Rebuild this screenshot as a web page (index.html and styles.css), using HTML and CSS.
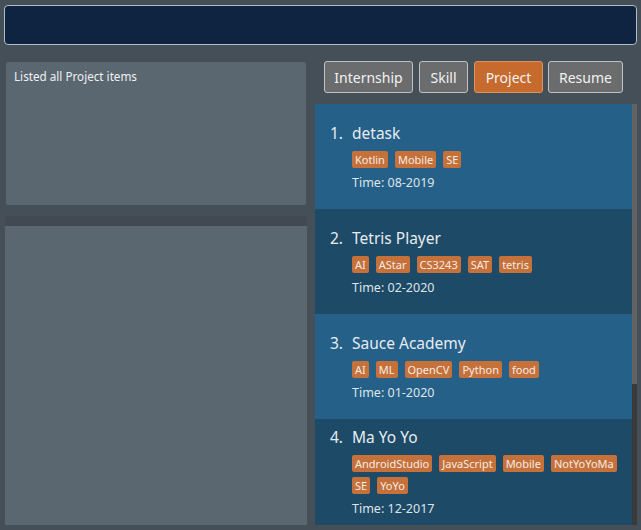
FILE: index.html
```html
<!DOCTYPE html>
<html>
<head>
<meta charset="utf-8">
<link rel="stylesheet" href="styles.css">
</head>
<body>
<div class="app">
  <div class="topbar"></div>
  <div class="main">
    <div class="left">
      <div class="result">Listed all Project items</div>
      <div class="split"><div class="split-band"></div></div>
      <div class="lower"></div>
    </div>
    <div class="right">
      <div class="tabs">
        <button class="tab tab-intern">Internship</button>
        <button class="tab tab-skill">Skill</button>
        <button class="tab tab-project active">Project</button>
        <button class="tab tab-resume">Resume</button>
      </div>
      <div class="list">
        <div class="cards">
          <div class="card light">
            <div class="title"><span class="num">1.</span><span class="name">detask</span></div>
            <div class="tags"><span class="tag">Kotlin</span><span class="tag">Mobile</span><span class="tag">SE</span></div>
            <div class="time">Time: 08-2019</div>
          </div>
          <div class="card dark">
            <div class="title"><span class="num">2.</span><span class="name">Tetris Player</span></div>
            <div class="tags"><span class="tag">AI</span><span class="tag">AStar</span><span class="tag">CS3243</span><span class="tag">SAT</span><span class="tag">tetris</span></div>
            <div class="time">Time: 02-2020</div>
          </div>
          <div class="card light">
            <div class="title"><span class="num">3.</span><span class="name">Sauce Academy</span></div>
            <div class="tags"><span class="tag">AI</span><span class="tag">ML</span><span class="tag">OpenCV</span><span class="tag">Python</span><span class="tag">food</span></div>
            <div class="time">Time: 01-2020</div>
          </div>
          <div class="card dark">
            <div class="title"><span class="num">4.</span><span class="name">Ma Yo Yo</span></div>
            <div class="tags"><span class="tag">AndroidStudio</span><span class="tag">JavaScript</span><span class="tag">Mobile</span><span class="tag">NotYoYoMa</span><span class="tag">SE</span><span class="tag">YoYo</span></div>
            <div class="time">Time: 12-2017</div>
          </div>
          <div class="card light card-next"></div>
        </div>
        <div class="scrollbar"><div class="thumb"></div></div>
      </div>
    </div>
  </div>
</div>
</body>
</html>
```
FILE: styles.css
```css
html, body {
  margin: 0;
  padding: 0;
  background: #454f58;
  font-family: "Noto Sans", "Open Sans", sans-serif;
  color: #e6e8ea;
}
.app {
  width: 641px;
  height: 530px;
  overflow: hidden;
}
.topbar {
  margin: 5px 4px 0 4px;
  height: 40px;
  box-sizing: border-box;
  border: 1px solid #b4bbc2;
  border-radius: 4px;
  background: #0f2441;
}
.main {
  display: flex;
  margin-top: 16px;
}
.left {
  width: 302px;
  margin-left: 5px;
  display: flex;
  flex-direction: column;
}
.result {
  margin: 1px 1px 0 1px;
  height: 143px;
  box-sizing: border-box;
  background: #5b6770;
  border-radius: 2px;
  padding: 7px 8px;
  font-size: 11.7px;
  line-height: 15px;
  color: #eef0f2;
}
.split {
  height: 21px;
  display: flex;
  flex-direction: column;
  justify-content: flex-end;
}
.split-band {
  height: 10px;
  background: #414a52;
}
.lower {
  height: 299px;
  background: #5b6770;
}
.right {
  margin-left: 8px;
  width: 322px;
}
.tabs {
  display: flex;
  gap: 6px;
  padding-left: 9px;
  height: 32px;
}
.tab {
  box-sizing: border-box;
  height: 32px;
  padding: 0;
  border: 1px solid #bfc3c6;
  border-radius: 3px;
  background: #6b6c6d;
  color: #f2f2f2;
  font-family: "Noto Sans", "Open Sans", sans-serif;
  font-size: 14px;
}
.tab-intern { width: 89px; }
.tab-skill { width: 49px; }
.tab-project { width: 69px; }
.tab-resume { width: 75px; margin-left: -1px; }
.tab.active {
  background: #c66a2e;
  border-color: #d99466;
}
.list {
  margin-top: 11px;
  height: 421px;
  display: flex;
}
.cards {
  width: 317px;
  height: 421px;
  overflow: hidden;
}
.card {
  min-height: 105px;
  box-sizing: border-box;
  padding: 8px 3px 8px 15px;
  display: flex;
  flex-direction: column;
  justify-content: center;
}
.card.light { background: #256089; }
.card.dark { background: #1d4a67; }
.title {
  display: flex;
  font-size: 15.5px;
  line-height: 20px;
  color: #e8ecef;
}
.num {
  margin-right: 9px;
}
.tags {
  display: flex;
  flex-wrap: wrap;
  gap: 5px 7px;
  margin: 8px 0 0 22px;
}
.tag {
  height: 17px;
  line-height: 17px;
  padding: 0 3px;
  background: #c6703a;
  border-radius: 2px;
  font-size: 11px;
  color: #f3ece6;
}
.time {
  margin: 6px 0 0 22px;
  font-size: 12.5px;
  line-height: 17px;
  color: #dfe4e8;
}
.scrollbar {
  width: 5px;
  height: 421px;
  background: #393a3b;
}
.thumb {
  height: 280px;
  background: #606263;
}
```
